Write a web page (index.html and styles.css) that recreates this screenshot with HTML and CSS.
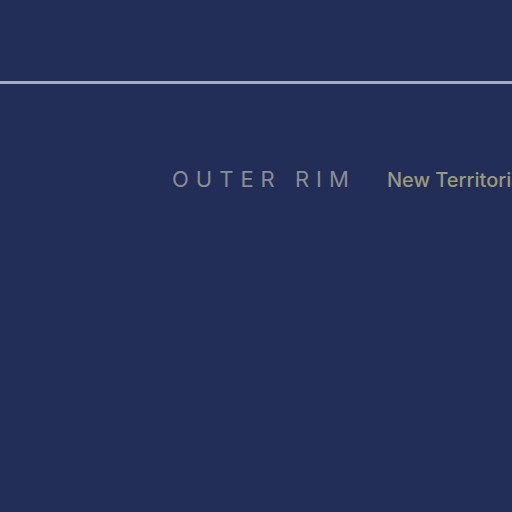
FILE: index.html
```html
<!DOCTYPE html>
<html>
<head>
<meta charset="utf-8">
<link rel="stylesheet" href="styles.css">
</head>
<body>
<header class="top"></header>
<div class="rule"></div>
<main class="content">
  <div class="row">
    <span class="brand">OUTER RIM</span>
    <span class="region">New Territories</span>
  </div>
</main>
</body>
</html>
```
FILE: styles.css
```css
html, body {
  margin: 0;
  padding: 0;
  width: 512px;
  height: 512px;
  overflow: hidden;
  background: #222e58;
}
.top {
  height: 81px;
}
.rule {
  height: 3px;
  background: #a9aac4;
}
.content {
  padding-top: 82px;
}
.row {
  display: flex;
  align-items: baseline;
  padding-left: 172px;
  white-space: nowrap;
  font-family: Inter, "Noto Sans", sans-serif;
  line-height: 26px;
}
.brand {
  font-size: 22px;
  letter-spacing: 7px;
  color: #8c8c92;
  margin-right: 31px;
}
.region {
  font-size: 20px;
  font-weight: 500;
  color: #9a9a7c;
}
```
